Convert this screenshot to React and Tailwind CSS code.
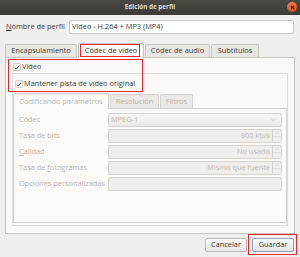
import React from "react";

const ROWS = [
  { label: "Códec", value: "MPEG-1", kind: "combo" },
  { label: "Tasa de bits", value: "800 kb/s", kind: "spin" },
  { label: "Calidad", value: "No usado", kind: "spin", key: "C" },
  { label: "Tasa de fotogramas", value: "Mismo que fuente", kind: "spin", key: "f" },
  { label: "Opciones personalizadas", value: "", kind: "text" },
];

function Check() {
  return (
    <span className="w-[8px] h-[8px] shrink-0 border border-[#d4d1cc] bg-[#fbfaf9] rounded-[1px] flex items-center justify-center">
      <svg viewBox="0 0 8 8" className="w-[7px] h-[7px]">
        <path d="M1.3 4.3 L3.1 6.1 L6.8 1.5" fill="none" stroke="#3c3b37" strokeWidth="1.3" />
      </svg>
    </span>
  );
}

function Label({ text, mnemonic }) {
  if (!mnemonic) return <span>{text}</span>;
  const i = text.indexOf(mnemonic);
  return (
    <span>
      {text.slice(0, i)}
      <span className="underline underline-offset-[1px]">{text[i]}</span>
      {text.slice(i + 1)}
    </span>
  );
}

function Field({ row }) {
  if (row.kind === "combo") {
    return (
      <div className="flex-1 h-full flex items-center justify-between px-[2px] border border-[#d6d3ce] rounded-[2px] bg-gradient-to-b from-[#f6f5f3] to-[#ebe9e6] text-[#bcb8b2]">
        <span>{row.value}</span>
        <svg viewBox="0 0 6 4" className="w-[5px] h-[4px] mr-[3px]">
          <path d="M0.5 0.8 L3 3.2 L5.5 0.8" fill="none" stroke="#c4c0ba" strokeWidth="0.9" />
        </svg>
      </div>
    );
  }
  if (row.kind === "spin") {
    return (
      <div className="flex-1 h-full flex border border-[#d6d3ce] rounded-[2px] bg-[#efeeec] text-[#bcb8b2]">
        <span className="flex-1 flex items-center justify-end pr-[2px]">{row.value}</span>
        <span className="w-[9px] border-l border-[#d6d3ce] flex flex-col">
          <span className="flex-1 flex items-center justify-center border-b border-[#e0ded9]">
            <svg viewBox="0 0 6 4" className="w-[4px] h-[3px]">
              <path d="M0.5 3.2 L3 0.8 L5.5 3.2" fill="none" stroke="#c4c0ba" strokeWidth="0.9" />
            </svg>
          </span>
          <span className="flex-1" />
        </span>
      </div>
    );
  }
  return <div className="flex-1 h-full border border-[#d6d3ce] rounded-[2px] bg-[#efeeec]" />;
}

export default function App() {
  return (
    <div className="w-[300px] h-[257px] overflow-hidden bg-[#f0efed] flex flex-col font-['Open_Sans',sans-serif] text-[7.4px] leading-none text-[#3c3b37]">
      {/* Title bar */}
      <div className="relative h-[15px] shrink-0 flex items-center justify-center bg-gradient-to-b from-[#4a4943] to-[#3b3a36] text-[#dfdbd2] font-bold text-[6.3px]">
        Edición de perfil
        <span className="absolute right-[3px] top-[2px] w-[10px] h-[10px] rounded-full bg-gradient-to-b from-[#f47b55] to-[#df4c1c] flex items-center justify-center">
          <svg viewBox="0 0 6 6" className="w-[5px] h-[5px]">
            <path d="M1 1 L5 5 M5 1 L1 5" stroke="#3a2018" strokeWidth="1.3" />
          </svg>
        </span>
      </div>

      <div className="flex-1 flex flex-col px-[5px] pt-[5px]">
        {/* Profile name */}
        <div className="flex items-center h-[14px]">
          <span className="w-[64px] pl-[1px] whitespace-nowrap">
            <Label text="Nombre de perfil" mnemonic="N" />
          </span>
          <div className="flex-1 mr-[1px] h-full bg-white border border-[#c9c5bf] rounded-[2px] flex items-center px-[2px]">
            Video - H.264 + MP3 (MP4)
          </div>
        </div>

        {/* Tabs */}
        <div className="mt-[9px] h-[15px] -mb-[1px] flex gap-[1px] relative z-10 whitespace-nowrap">
          <div className="w-[72px] mt-[1px] h-[13px] border border-b-0 border-[#cbc7c1] rounded-t-[2px] bg-[#e9e7e4] flex items-center justify-center">
            Encapsulamiento
          </div>
          <div className="relative w-[66px] h-[15px] border border-b-0 border-[#c7c3bd] rounded-t-[2px] bg-[#faf9f8] flex items-center justify-center">
            Códec de vídeo
            <span className="absolute left-[1px] right-[3px] top-0 bottom-[1px] border border-[#e8262e]" />
          </div>
          <div className="w-[65px] mt-[1px] h-[13px] border border-b-0 border-[#cbc7c1] rounded-t-[2px] bg-[#e9e7e4] flex items-center justify-center">
            Códec de audio
          </div>
          <div className="w-[48px] mt-[1px] h-[13px] border border-b-0 border-[#cbc7c1] rounded-t-[2px] bg-[#e9e7e4] flex items-center justify-center">
            Subtítulos
          </div>
        </div>

        {/* Tab panel */}
        <div className="relative h-[177px] shrink-0 border border-[#c7c3bd] bg-[#faf9f8] flex flex-col">
          <span className="absolute left-[2px] top-[1px] w-[135px] h-[33px] border border-[#e8262e]" />

          <div className="mt-[4px] h-[10px] pl-[7px] flex items-center gap-[1px]">
            <Check />
            <span>Vídeo</span>
          </div>

          <div className="mt-[1px] mx-[6px] mb-[7px] flex-1 border border-[#e0ddd9] flex flex-col pb-[2px]">
            <div className="mt-[5px] h-[10px] pl-[2px] flex items-center gap-[1px]">
              <Check />
              <span>Mantener pista de vídeo original</span>
            </div>

            {/* Inner tabs */}
            <div className="mt-[4px] h-[16px] -mb-[1px] flex gap-[1px] relative z-10 text-[#b9b5af] whitespace-nowrap">
              <div className="w-[96px] h-[16px] border border-b-0 border-[#d2cfca] rounded-t-[2px] bg-[#fbfaf9] flex items-center justify-center">
                Codificando parámetros
              </div>
              <div className="w-[49px] mt-[1px] h-[14px] border border-b-0 border-[#d6d3ce] rounded-t-[2px] bg-[#ebe9e6] flex items-center justify-center">
                Resolución
              </div>
              <div className="w-[33px] mt-[1px] h-[14px] border border-b-0 border-[#d6d3ce] rounded-t-[2px] bg-[#ebe9e6] flex items-center justify-center">
                Filtros
              </div>
            </div>

            <div className="flex-1 border border-[#d2cfca] bg-[#fbfaf9] pt-[4px] pl-[5px] pr-[4px] flex flex-col gap-[2px] text-[#b9b5af]">
              {ROWS.map((row) => (
                <div key={row.label} className="h-[14px] flex items-center">
                  <span className="w-[89px] shrink-0 whitespace-nowrap">
                    <Label text={row.label} mnemonic={row.key} />
                  </span>
                  <Field row={row} />
                </div>
              ))}
            </div>
          </div>
        </div>

        {/* Buttons */}
        <div className="mt-[4px] h-[14px] flex justify-end gap-[5px] pr-[1px]">
          <button className="w-[42px] h-full border border-[#bcb8b2] rounded-[2px] bg-gradient-to-b from-[#fbfbfa] to-[#ebe9e6] text-[#3c3b37]">
            Cancelar
          </button>
          <button className="relative w-[42px] h-full border border-[#8fa2b5] rounded-[2px] bg-gradient-to-b from-[#f7f8f9] to-[#e3e6e9] text-[#3c3b37]">
            Guardar
            <span className="absolute -left-[5px] -right-[4px] -top-[5px] -bottom-[4px] border border-[#e8262e]" />
          </button>
        </div>
      </div>
    </div>
  );
}
